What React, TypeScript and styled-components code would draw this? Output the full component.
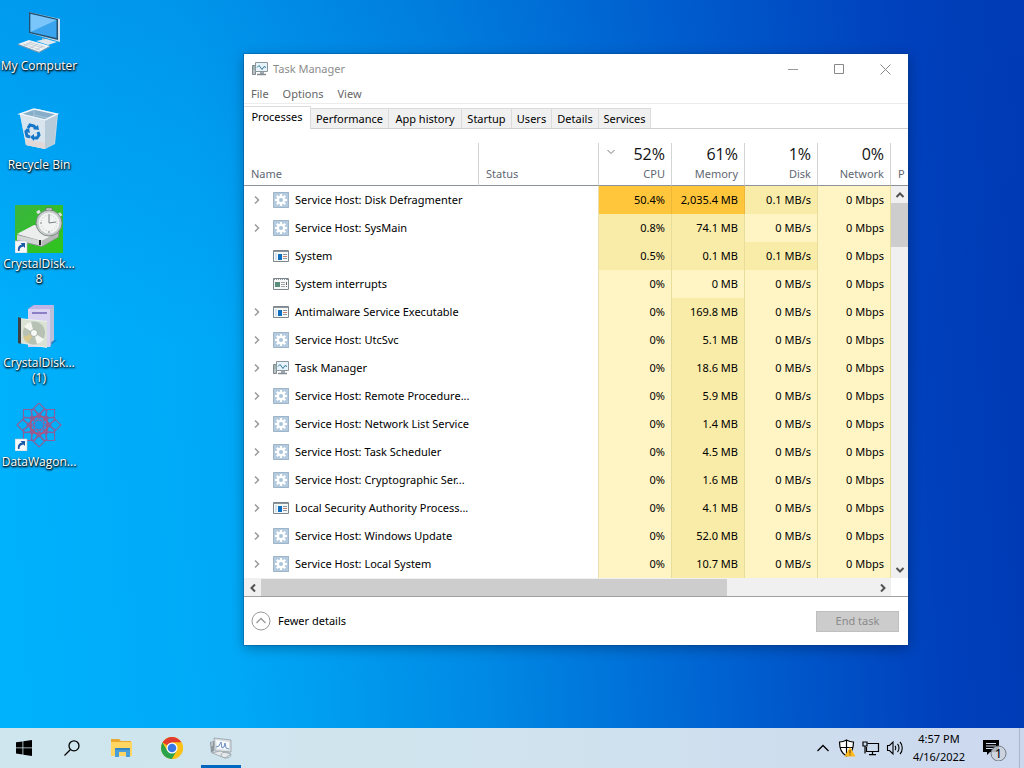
import React, { FC, ReactNode } from 'react';
import styled, { createGlobalStyle, css } from 'styled-components';

type T_ProcessIcon = 'gear' | 'app' | 'interrupts' | 'monitor';
type T_Heat = 'none' | 'low' | 'high';

interface ProcessRow {
  name: string;
  icon: T_ProcessIcon;
  expandable: boolean;
  cpu: string;
  memory: string;
  disk: string;
}

const GlobalStyle = createGlobalStyle`
  * {
    box-sizing: border-box;
  }

  body {
    margin: 0;
    font-family: 'Noto Sans', 'Open Sans', sans-serif;
    font-size: 11px;
    line-height: 16px;
    color: #000;
  }

  button {
    font: inherit;
    color: inherit;
    background: none;
    border: 0;
    padding: 0;
    margin: 0;
  }

  svg {
    display: block;
    flex: none;
  }
`;

const heatColors: Record<T_Heat, string> = {
  none: '#fff4c4',
  low: '#f9eca8',
  high: '#ffc63c',
};

/* ---------- Desktop ---------- */

const Desktop = styled.div`
  position: relative;
  min-height: 100vh;
  display: flex;
  flex-direction: column;
  overflow: hidden;
  background:
    linear-gradient(
      180deg,
      rgba(0, 70, 190, 0.2) 0%,
      rgba(0, 120, 220, 0) 45%,
      rgba(0, 190, 255, 0) 100%
    ),
    linear-gradient(
      86deg,
      #00b2fc 0%,
      #00a9f7 22%,
      #008ae5 45%,
      #0061d0 68%,
      #0040bc 88%,
      #0038b2 100%
    );
`;

const IconColumn = styled.nav`
  flex: 1;
  display: grid;
  grid-auto-rows: 99px;
  align-content: start;
  justify-content: start;
`;

const Shortcut = styled.a`
  width: 78px;
  padding-top: 7px;
  display: flex;
  flex-direction: column;
  align-items: center;
  gap: 3px;
  color: #fff;
  font-family: 'Open Sans', 'Noto Sans', sans-serif;
  font-size: 12px;
  line-height: 15px;
  text-align: center;
  text-decoration: none;
  white-space: nowrap;
  text-shadow:
    0 1px 2px #000,
    1px 1px 2px #000;
`;

/* ---------- Window ---------- */

const Window = styled.section`
  position: absolute;
  top: 54px;
  left: 244px;
  right: 116px;
  background: #fff;
  box-shadow:
    0 0 0 1px rgba(0, 60, 130, 0.3),
    0 3px 12px rgba(0, 0, 0, 0.3);
`;

const TitleBar = styled.header`
  height: 30px;
  padding-left: 8px;
  display: flex;
  align-items: center;
  color: #8c8c8c;
`;

const WindowTitle = styled.h1`
  flex: 1;
  margin: 0;
  padding-left: 5px;
  font-size: 11px;
  font-weight: 400;
`;

const CaptionButton = styled.button`
  width: 46px;
  height: 30px;
  display: grid;
  place-items: center;
`;

const MenuBar = styled.nav`
  height: 20px;
  padding-left: 7px;
  display: flex;
  align-items: center;
  gap: 14px;
  color: #666;
  border-bottom: 1px solid #ececec;
`;

const TabList = styled.div`
  height: 25px;
  display: flex;
  align-items: flex-end;
  border-bottom: 1px solid #d0d0d0;
`;

const Tab = styled.button<{ $width: number; $active?: boolean }>`
  width: ${({ $width }) => $width}px;
  height: 20px;
  background: #f0f0f0;
  border: 1px solid #dcdcdc;
  border-left: 0;
  border-bottom: 0;
  white-space: nowrap;
  ${({ $active }) =>
    $active &&
    css`
      height: 23px;
      padding-bottom: 2px;
      margin-bottom: -1px;
      background: #fff;
    `}
`;

const GridArea = styled.div`
  position: relative;
  padding-top: 14px;
`;

const ProcessTable = styled.table`
  width: 100%;
  table-layout: fixed;
  border-collapse: separate;
  border-spacing: 0;
`;

const Column = styled.col<{ $width?: number }>`
  width: ${({ $width }) => ($width ? `${$width}px` : 'auto')};
`;

const HeaderCell = styled.th<{ $numeric?: boolean; $last?: boolean }>`
  height: 43px;
  padding: 0 6px 3px 7px;
  font-weight: 400;
  color: #5f6773;
  text-align: ${({ $numeric }) => ($numeric ? 'right' : 'left')};
  vertical-align: bottom;
  border-right: ${({ $last }) => ($last ? 0 : '1px solid #d4d4d4')};
  border-bottom: 1px solid #8e9299;
`;

const Total = styled.div`
  display: flex;
  align-items: flex-start;
  justify-content: flex-end;
  color: #111;
  font-family: 'Open Sans', 'Noto Sans', sans-serif;
  font-size: 16px;
  line-height: 20px;
  padding-bottom: 2px;

  svg {
    margin: 3px auto 0 0;
  }
`;

const NameCell = styled.td`
  height: 28px;
  padding: 0 0 0 7px;
`;

const NameContent = styled.div`
  display: flex;
  align-items: center;
  white-space: nowrap;
`;

const Expander = styled.button`
  flex: none;
  width: 12px;
  height: 16px;
  margin-right: 10px;
  display: grid;
  place-items: center;
`;

const ExpanderGap = styled.span`
  flex: none;
  width: 22px;
`;

const ProcessName = styled.span`
  padding-left: 6px;
`;

const StatusCell = styled.td`
  padding: 0;
  border-right: 1px solid #e9dfae;
`;

const HeatCell = styled.td<{ $heat: T_Heat }>`
  padding: 0 6px 0 0;
  text-align: right;
  white-space: nowrap;
  background: ${({ $heat }) => heatColors[$heat]};
  border-right: 1px solid
    ${({ $heat }) => ($heat === 'high' ? '#efb73a' : '#e9dd9c')};
`;

const VerticalScroll = styled.div`
  position: absolute;
  top: 57px;
  right: 0;
  bottom: 0;
  width: 17px;
  display: flex;
  flex-direction: column;
  background: #f0f0f0;
`;

const HorizontalScroll = styled.div`
  height: 18px;
  margin-right: 17px;
  padding-top: 1px;
  display: flex;
  background: #f0f0f0;
`;

const ScrollButton = styled.button`
  flex: none;
  width: 17px;
  height: 17px;
  display: grid;
  place-items: center;
`;

const VerticalThumb = styled.div`
  height: 44px;
  background: #cdcdcd;
`;

const HorizontalTrack = styled.div`
  flex: 1;
`;

const HorizontalThumb = styled.div`
  width: 76%;
  height: 17px;
  background: #cdcdcd;
`;

const Footer = styled.footer`
  height: 49px;
  padding: 0 9px 0 7px;
  display: flex;
  align-items: center;
  justify-content: space-between;
  border-top: 1px solid #a0a0a0;
`;

const DetailsButton = styled.button`
  display: flex;
  align-items: center;
  gap: 7px;
`;

const EndTaskButton = styled.button`
  width: 83px;
  height: 21px;
  color: #8a8a8a;
  background: #ccc;
  border: 1px solid #bfbfbf;
`;

/* ---------- Taskbar ---------- */

const TaskbarRow = styled.footer`
  height: 40px;
  display: flex;
  background: linear-gradient(90deg, #cfe6ee 0%, #d0e3ee 50%, #ccd8ee 100%);
`;

const TaskbarButton = styled.button<{ $width: number; $running?: boolean }>`
  width: ${({ $width }) => $width}px;
  display: grid;
  place-items: center;
  ${({ $running }) =>
    $running &&
    css`
      background: linear-gradient(#0067c0, #0067c0) center bottom / 40px 3px
        no-repeat;
    `}
`;

const Tray = styled.div`
  margin-left: auto;
  display: flex;
`;

const Clock = styled.button`
  width: 64px;
  line-height: 18px;
  white-space: nowrap;
`;

const ShowDesktop = styled.button`
  width: 5px;
  border-left: 1px solid #a9b6c8;
`;

/* ---------- Icons ---------- */

const ComputerIcon: FC = () => (
  <svg width="48" height="48" viewBox="0 0 48 48">
    <path d="M14 5l31 7v23L14 26z" fill="#cfe0ec" />
    <path d="M14 5l29 7v21l-29-7z" fill="#25506f" />
    <path d="M15.500 7l26 6v18l-26-6z" fill="#3ba4ee" />
    <path d="M15.500 7l26 6-26 12z" fill="#7ac6fa" />
    <path d="M27 31l8 2v4l-8-2z" fill="#a9bac6" />
    <path d="M21 34l10-2 11 3-9 3z" fill="#dfe7ec" />
    <path d="M3 37l11-4 21 6-11 6z" fill="#f1f4f6" />
    <path d="M3 37l21 8 11-6v1l-11 6-21-8z" fill="#8a9aa8" />
    <path d="M8 37l17 6M11 36l17 5M14 35l16 5M9 39l8-4M15 41l8-4M21 43l7-4" stroke="#bdc8d0" strokeWidth=".8" />
  </svg>
);

const RecycleIcon: FC = () => (
  <svg width="48" height="48" viewBox="0 0 48 48">
    <path d="M5 8l6 31 19 4 10-5 3-30-20-5z" fill="#c8d8e4" />
    <path d="M5 8l14-5 23 5-12 6z" fill="#86aec8" />
    <path d="M19 4v6l-9 2M19 9l14 3" stroke="#a9c6d9" fill="none" />
    <path d="M5 8l14-5 23 5-12 6z" fill="none" stroke="#eef5fa" strokeWidth="1.500" />
    <path d="M5 9l25 6v28l-19-4z" fill="#d9e5ee" />
    <path d="M30 15l12-6-3 29-9 5z" fill="#b7cbd9" />
    <path d="M10 33l20 4v6l-19-4z" fill="#e2d8d8" />
    <g fill="none" stroke="#1676c8" strokeWidth="3">
      <path d="M13 22l2-3 4 1 2 3" />
      <path d="M23 26l1 3-2 3h-3" />
      <path d="M15 31l-3-1-1-4 2-3" />
    </g>
    <path d="M18 23l6 1-1-5zM19 28v7l-4-4zM9 25l5-3 1 5z" fill="#1676c8" />
  </svg>
);

const ShortcutArrow: FC = () => (
  <>
    <path d="M0 36h12v12H0z" fill="#f6f8fa" stroke="#b9c4cf" strokeWidth=".6" />
    <path d="M3 46c-.5-4 1-6 4-6.500L5.500 38H10v5l-1.500-1.500C6 42 4.500 43 4.500 46z" fill="#1c5aa8" />
  </>
);

const DiskMarkIcon: FC = () => (
  <svg width="48" height="48" viewBox="0 0 48 48">
    <defs>
      <linearGradient id="disk-green" x1="0" y1="0" x2="1" y2="1">
        <stop offset="0" stopColor="#3bb53f" />
        <stop offset="1" stopColor="#2fc51c" />
      </linearGradient>
    </defs>
    <path d="M0 0h48v48H0z" fill="url(#disk-green)" />
    <path d="M2 30l17-10 25 7v5L27 42 2 36z" fill="#8c9490" />
    <path d="M2 29l17-9 25 7-17 9z" fill="#eceeed" />
    <path d="M2 30l25 6v5L2 35z" fill="#d3d7d5" />
    <path d="M27 36l16-9v5l-16 9z" fill="#b4b9b6" />
    <path d="M25 35v5" stroke="#222" strokeWidth="2" />
    <path d="M31 3h6v5h-6z" fill="#d4d8d7" stroke="#667" strokeWidth=".7" />
    <path d="M22 8l3-2M44 8l2 3" stroke="#dfe2e1" strokeWidth="3" />
    <circle cx="34" cy="18" r="13" fill="#c6cccb" stroke="#707a78" strokeWidth=".8" />
    <circle cx="34" cy="18" r="10.500" fill="#f0f3f2" />
    <path d="M34 9v9l7-1M34 26v2M25 18h2" stroke="#6a7573" strokeWidth=".9" fill="none" />
    <circle cx="34" cy="18" r="8" fill="none" stroke="#bcc5c3" strokeDasharray="1 2" />
    <ShortcutArrow />
  </svg>
);

const InstallerIcon: FC = () => (
  <svg width="48" height="48" viewBox="0 0 48 48">
    <path d="M14 4l5-3h20l-3 4v37l-4 1z" fill="#9c90cf" />
    <path d="M13 5h22v38H13z" fill="#d9d2f0" />
    <path d="M35 5l4-4v35l-4 7z" fill="#b9c0d8" />
    <path d="M13 5l6-4h20l-4 4z" fill="#c1b5e8" />
    <path d="M17 9h15" stroke="#8d7fc6" strokeWidth="2" />
    <path d="M4 14l28 3v27L4 39z" fill="#edf1ec" />
    <path d="M3 13l3 1v26l-3-1z" fill="#3d4247" />
    <path d="M6 15l26 3v25L6 39z" fill="#d9e2d5" />
    <ellipse cx="19" cy="29" rx="11" ry="11.500" fill="#b7c2b4" />
    <path d="M19 29L9 23a11 11 0 0 1 7-5zM19 29l10 6a11 11 0 0 1-7 5z" fill="#f4f6f1" />
    <path d="M19 29L8 33a11 11 0 0 0 5 6z" fill="#d8c98c" />
    <circle cx="19" cy="29" r="3.500" fill="#f8faf8" stroke="#949e94" strokeWidth=".7" />
    <path d="M36 38l6-3-2 3-4 3z" fill="#126bb0" opacity=".6" />
  </svg>
);

const WagonIcon: FC = () => (
  <svg width="48" height="48" viewBox="0 0 48 48">
    <g fill="none" stroke="#8a5f9c" strokeWidth="1.100" transform="translate(24 22)">
      {[0, 45, 90, 135].map((angle) => (
        <g key={angle} transform={`rotate(${angle})`}>
          <path d="M-22 0L-14-8L0-4L14-8L22 0L14 8L0 4L-14 8z" />
          <path d="M-16-6L0 12L16-6" />
          <path d="M-16 6L0-12L16 6" />
        </g>
      ))}
      <circle r="9" stroke="#b0557a" />
      <circle r="4" fill="#129bea" stroke="none" />
    </g>
    <ShortcutArrow />
  </svg>
);

const MonitorIcon: FC = () => (
  <svg width="16" height="16" viewBox="0 0 16 16">
    <path d="M.5 4.500h3v9h-3z" fill="#b9c3c8" stroke="#7e888e" />
    <path d="M1.500 6h1M1.500 8h1" stroke="#4f8f63" />
    <path d="M3.500 1.500h12v9h-12z" fill="#e6f3fa" stroke="#8b969d" />
    <path d="M5 6.500l2-2 3 4 2-3 2 1" fill="none" stroke="#36789b" />
    <path d="M8 11h4v2H8z" fill="#a2acb2" />
    <path d="M5 13.500h9" stroke="#808b92" strokeWidth="1.500" />
  </svg>
);

const GearIcon: FC = () => (
  <svg width="16" height="16" viewBox="0 0 16 16">
    <path d="M0 0h16v16H0z" fill="#b4cadf" />
    <path d="M.5.5h15v15H.5z" fill="none" stroke="#9db4c9" />
    <g stroke="#fff" strokeWidth="2.200">
      {[0, 45, 90, 135].map((angle) => (
        <path key={angle} d="M8 2v12" transform={`rotate(${angle} 8 8)`} />
      ))}
    </g>
    <circle cx="8" cy="8" r="4.200" fill="#fff" />
    <circle cx="8" cy="8" r="2" fill="#a9c3da" />
  </svg>
);

const AppIcon: FC<{ muted?: boolean }> = ({ muted }) => (
  <svg width="16" height="16" viewBox="0 0 16 16">
    <path d="M.5 2.500h15v11H.5z" fill="#f7f8f8" stroke="#7e868d" />
    <path d="M1 3h14v1H1z" fill="#8d959c" />
    {muted ? (
      <>
        <path d="M2 3.500h12" stroke="#fff" strokeDasharray="1 1" />
        <path d="M2 6h5v5H2z" fill="#5b8d7c" />
        <path d="M8 6.500h4M8 8.500h4M8 10.500h4" stroke="#9fa6ab" />
        <path d="M13.500 6v3M13.500 10v1" stroke="#666" />
      </>
    ) : (
      <>
        <path d="M2 5h2v7H2z" fill="#d5e4ef" />
        <path d="M5 6h4v6H5z" fill="#0f6fc0" />
        <path d="M10 6.500h4M10 10.500h4" stroke="#8997a3" />
        <path d="M10 8.500h4" stroke="#c77f6c" />
      </>
    )}
  </svg>
);

const Chevron: FC<{ angle: number; color: string; weight?: number }> = ({
  angle,
  color,
  weight = 2,
}) => (
  <svg width="10" height="10" viewBox="0 0 10 10">
    <path
      d="M3 1.500L6.500 5L3 8.500"
      fill="none"
      stroke={color}
      strokeWidth={weight}
      transform={`rotate(${angle} 5 5)`}
    />
  </svg>
);

const StartIcon: FC = () => (
  <svg width="16" height="16" viewBox="0 0 16 16">
    <path d="M0 2.300l6.500-.9v6.100H0zM7.300 1.300L16 0v7.500H7.300zM0 8.300h6.500v6.200L0 13.600zM7.300 8.300H16V16l-8.700-1.300z" />
  </svg>
);

const SearchIcon: FC = () => (
  <svg width="16" height="16" viewBox="0 0 16 16" fill="none" stroke="#000" strokeWidth="1.300">
    <circle cx="10" cy="5.800" r="5" />
    <path d="M6.500 9.500L.5 15.500" />
  </svg>
);

const FolderIcon: FC = () => (
  <svg width="22" height="20" viewBox="0 0 22 20">
    <path d="M0 1h8l2 2h10v13H0z" fill="#eaa92e" />
    <path d="M0 4h21v14H0z" fill="#ffd661" />
    <path d="M4 10h15v9h-4v-5H8v5H4z" fill="#4a9fd8" />
    <path d="M4 10h15v2H4z" fill="#3686c4" />
  </svg>
);

const ChromeIcon: FC = () => (
  <svg width="22" height="22" viewBox="0 0 22 22">
    <circle cx="11" cy="11" r="11" fill="#fbc116" />
    <path d="M11 11L1.500 5.500A11 11 0 0 1 20.500 5.500H11z" fill="#e33b2e" />
    <path d="M1.500 5.500A11 11 0 0 0 11 22l4.800-8.300L11 11 6.200 13.700z" fill="#2ba24c" />
    <path d="M11 5.500h9.500A11 11 0 0 1 11 22l4.800-8.300z" fill="#fbc116" />
    <circle cx="11" cy="11" r="5.500" fill="#fff" />
    <circle cx="11" cy="11" r="4.300" fill="#3b78e7" />
  </svg>
);

const TaskbarMonitorIcon: FC = () => (
  <svg width="24" height="22" viewBox="0 0 24 22">
    <path d="M1 5l4-1v10l-3 2z" fill="#8e979d" />
    <path d="M2 6h2M2 8h2" stroke="#e6ebee" />
    <path d="M5 1l17 2v12L6 14z" fill="#d9dfe3" stroke="#a3acb3" />
    <path d="M7 3l13 2v8L8 12z" fill="#f7fafc" />
    <path d="M7 10l3-1 2-4 1 6 2-1 1-4 1 5 3 1" fill="none" stroke="#6d8fc4" />
    <path d="M3 16l8-2 11 3-6 4z" fill="#e5e9ec" stroke="#a8b0b6" />
    <ellipse cx="17" cy="18" rx="5" ry="3" fill="none" stroke="#a7afb5" />
  </svg>
);

const ShieldIcon: FC = () => (
  <svg width="18" height="18" viewBox="0 0 18 18">
    <path d="M8.500 1C6 2.500 4 3 1.500 3c0 6 1 11 7 14 6-3 7-8 7-14-2.500 0-4.500-.5-7-2z" fill="#fff" stroke="#000" strokeWidth="1.200" />
    <path d="M8.500 1v16M2 8.500h13" stroke="#000" strokeWidth="1.200" />
    <path d="M12 8l5.500 9.500h-11z" fill="#ffb91d" />
    <path d="M12 11v3.500M12 15.500v1" stroke="#5d3b00" />
  </svg>
);

const NetworkIcon: FC = () => (
  <svg width="18" height="16" viewBox="0 0 18 16" fill="none" stroke="#000" strokeWidth="1.200">
    <path d="M5.500 3.500h11v8h-12V7" />
    <path d="M1 2h4v4H1zM3 6v7.500M10.500 12v2.500M7 14.600h7" />
  </svg>
);

const SpeakerIcon: FC = () => (
  <svg width="18" height="16" viewBox="0 0 18 16" fill="none" stroke="#000" strokeWidth="1.100">
    <path d="M1.500 5.500h2L7 2v12l-3.500-3.500h-2z" />
    <path d="M9 6c1 1 1 3 0 4M11.500 4c2 2 2 6 0 8M14 2c3 3 3 9 0 12" />
  </svg>
);

const NotificationIcon: FC = () => (
  <svg width="28" height="26" viewBox="0 0 28 26">
    <path d="M2 5h16v12H9l-3 3v-3H2z" fill="#000" />
    <path d="M5 8.500h10M5 11h10M5 13.500h7" stroke="#d0dced" />
    <circle cx="17.500" cy="19.500" r="7.500" transform="translate(0 -1)" fill="#cbd2da" fillOpacity=".85" stroke="#737a83" />
    <text x="17.500" y="23" fontSize="13" textAnchor="middle">
      1
    </text>
  </svg>
);

const processIcons: Record<T_ProcessIcon, ReactNode> = {
  gear: <GearIcon />,
  app: <AppIcon />,
  interrupts: <AppIcon muted />,
  monitor: <MonitorIcon />,
};

/* ---------- Data ---------- */

const shortcuts: { lines: string[]; icon: ReactNode }[] = [
  { lines: ['My Computer'], icon: <ComputerIcon /> },
  { lines: ['Recycle Bin'], icon: <RecycleIcon /> },
  { lines: ['CrystalDisk...', '8'], icon: <DiskMarkIcon /> },
  { lines: ['CrystalDisk...', '(1)'], icon: <InstallerIcon /> },
  { lines: ['DataWagon...'], icon: <WagonIcon /> },
];

const tabs = [
  { label: 'Processes', width: 67 },
  { label: 'Performance', width: 78 },
  { label: 'App history', width: 73 },
  { label: 'Startup', width: 50 },
  { label: 'Users', width: 40 },
  { label: 'Details', width: 47 },
  { label: 'Services', width: 52 },
];

const totals = [
  { label: 'CPU', value: '52%' },
  { label: 'Memory', value: '61%' },
  { label: 'Disk', value: '1%' },
  { label: 'Network', value: '0%' },
];

const row = (
  name: string,
  memory: string,
  icon: T_ProcessIcon = 'gear',
  cpu = '0%',
  disk = '0 MB/s',
  expandable = true,
): ProcessRow => ({ name, memory, icon, cpu, disk, expandable });

const processes: ProcessRow[] = [
  row('Service Host: Disk Defragmenter', '2,035.4 MB', 'gear', '50.4%', '0.1 MB/s'),
  row('Service Host: SysMain', '74.1 MB', 'gear', '0.8%'),
  row('System', '0.1 MB', 'app', '0.5%', '0.1 MB/s', false),
  row('System interrupts', '0 MB', 'interrupts', '0%', '0 MB/s', false),
  row('Antimalware Service Executable', '169.8 MB', 'app'),
  row('Service Host: UtcSvc', '5.1 MB'),
  row('Task Manager', '18.6 MB', 'monitor'),
  row('Service Host: Remote Procedure...', '5.9 MB'),
  row('Service Host: Network List Service', '1.4 MB'),
  row('Service Host: Task Scheduler', '4.5 MB'),
  row('Service Host: Cryptographic Ser...', '1.6 MB'),
  row('Local Security Authority Process...', '4.1 MB', 'app'),
  row('Service Host: Windows Update', '52.0 MB'),
  row('Service Host: Local System', '10.7 MB'),
];

const getHeat = (value: string): T_Heat => {
  const amount = parseFloat(value.replace(',', ''));
  if (amount === 0) return 'none';
  if (value.endsWith('%')) return amount > 25 ? 'high' : 'low';
  return amount > 1000 ? 'high' : 'low';
};

/* ---------- Parts ---------- */

const Processes: FC = () => (
  <GridArea>
    <ProcessTable>
      <colgroup>
        <Column $width={235} />
        <Column />
        {totals.map(({ label }) => (
          <Column key={label} $width={73} />
        ))}
        <Column $width={17} />
      </colgroup>
      <thead>
        <tr>
          <HeaderCell>Name</HeaderCell>
          <HeaderCell>Status</HeaderCell>
          {totals.map(({ label, value }) => (
            <HeaderCell key={label} $numeric>
              <Total>
                {label === 'CPU' && (
                  <Chevron angle={90} color="#777" weight={1} />
                )}
                {value}
              </Total>
              {label}
            </HeaderCell>
          ))}
          <HeaderCell $last>P</HeaderCell>
        </tr>
      </thead>
      <tbody>
        {processes.map(({ name, icon, expandable, cpu, memory, disk }) => (
          <tr key={name}>
            <NameCell>
              <NameContent>
                {expandable ? (
                  <Expander aria-label={`Expand ${name}`}>
                    <Chevron angle={0} color="#999" weight={1.5} />
                  </Expander>
                ) : (
                  <ExpanderGap />
                )}
                {processIcons[icon]}
                <ProcessName>{name}</ProcessName>
              </NameContent>
            </NameCell>
            <StatusCell />
            <HeatCell $heat={getHeat(cpu)}>{cpu}</HeatCell>
            <HeatCell $heat={getHeat(memory)}>{memory}</HeatCell>
            <HeatCell $heat={getHeat(disk)}>{disk}</HeatCell>
            <HeatCell $heat="none">0 Mbps</HeatCell>
            <td />
          </tr>
        ))}
      </tbody>
    </ProcessTable>
    <VerticalScroll>
      <ScrollButton aria-label="Scroll up">
        <Chevron angle={-90} color="#505050" />
      </ScrollButton>
      <VerticalThumb />
      <ScrollButton aria-label="Scroll down" style={{ marginTop: 'auto' }}>
        <Chevron angle={90} color="#505050" />
      </ScrollButton>
    </VerticalScroll>
  </GridArea>
);

const TaskManager: FC = () => (
  <Window>
    <TitleBar>
      <MonitorIcon />
      <WindowTitle>Task Manager</WindowTitle>
      <CaptionButton aria-label="Minimize">
        <svg width="10" height="10" viewBox="0 0 10 10" stroke="#999">
          <path d="M0 5.500h10" />
        </svg>
      </CaptionButton>
      <CaptionButton aria-label="Maximize">
        <svg width="10" height="10" viewBox="0 0 10 10" stroke="#888" fill="none">
          <path d="M.5.5h9v9h-9z" />
        </svg>
      </CaptionButton>
      <CaptionButton aria-label="Close">
        <svg width="11" height="11" viewBox="0 0 11 11" stroke="#888">
          <path d="M.5.5l10 10M10.500.5l-10 10" />
        </svg>
      </CaptionButton>
    </TitleBar>
    <MenuBar>
      <button>File</button>
      <button>Options</button>
      <button>View</button>
    </MenuBar>
    <TabList role="tablist">
      {tabs.map(({ label, width }, index) => (
        <Tab
          key={label}
          role="tab"
          aria-selected={index === 0}
          $width={width}
          $active={index === 0}
        >
          {label}
        </Tab>
      ))}
    </TabList>
    <Processes />
    <HorizontalScroll>
      <ScrollButton aria-label="Scroll left">
        <Chevron angle={180} color="#505050" />
      </ScrollButton>
      <HorizontalTrack>
        <HorizontalThumb />
      </HorizontalTrack>
      <ScrollButton aria-label="Scroll right">
        <Chevron angle={0} color="#505050" />
      </ScrollButton>
    </HorizontalScroll>
    <Footer>
      <DetailsButton>
        <svg width="20" height="20" viewBox="0 0 20 20" fill="none" stroke="#999">
          <circle cx="10" cy="10" r="9" />
          <path d="M5.500 12L10 7.500l4.500 4.500" strokeWidth="1.300" />
        </svg>
        Fewer details
      </DetailsButton>
      <EndTaskButton disabled>End task</EndTaskButton>
    </Footer>
  </Window>
);

const Taskbar: FC = () => (
  <TaskbarRow>
    <TaskbarButton $width={48} aria-label="Start">
      <StartIcon />
    </TaskbarButton>
    <TaskbarButton $width={48} aria-label="Search">
      <SearchIcon />
    </TaskbarButton>
    <TaskbarButton $width={52} aria-label="File Explorer">
      <FolderIcon />
    </TaskbarButton>
    <TaskbarButton $width={48} aria-label="Google Chrome">
      <ChromeIcon />
    </TaskbarButton>
    <TaskbarButton $width={50} $running aria-label="Task Manager">
      <TaskbarMonitorIcon />
    </TaskbarButton>
    <Tray>
      <TaskbarButton $width={24} aria-label="Show hidden icons">
        <svg width="12" height="8" viewBox="0 0 12 8" fill="none" stroke="#000" strokeWidth="1.300">
          <path d="M.5 7L6 1.500 11.500 7" />
        </svg>
      </TaskbarButton>
      <TaskbarButton $width={24} aria-label="Windows Security">
        <ShieldIcon />
      </TaskbarButton>
      <TaskbarButton $width={24} aria-label="Network">
        <NetworkIcon />
      </TaskbarButton>
      <TaskbarButton $width={24} aria-label="Volume">
        <SpeakerIcon />
      </TaskbarButton>
      <Clock>
        4:57 PM
        <br />
        4/16/2022
      </Clock>
      <TaskbarButton $width={48} aria-label="Notifications">
        <NotificationIcon />
      </TaskbarButton>
      <ShowDesktop aria-label="Show desktop" />
    </Tray>
  </TaskbarRow>
);

const App: FC = () => (
  <>
    <GlobalStyle />
    <Desktop>
      <IconColumn>
        {shortcuts.map(({ lines, icon }) => (
          <Shortcut key={lines.join(' ')} href="#">
            {icon}
            <span>
              {lines.map((line) => (
                <div key={line}>{line}</div>
              ))}
            </span>
          </Shortcut>
        ))}
      </IconColumn>
      <TaskManager />
      <Taskbar />
    </Desktop>
  </>
);

export default App;
